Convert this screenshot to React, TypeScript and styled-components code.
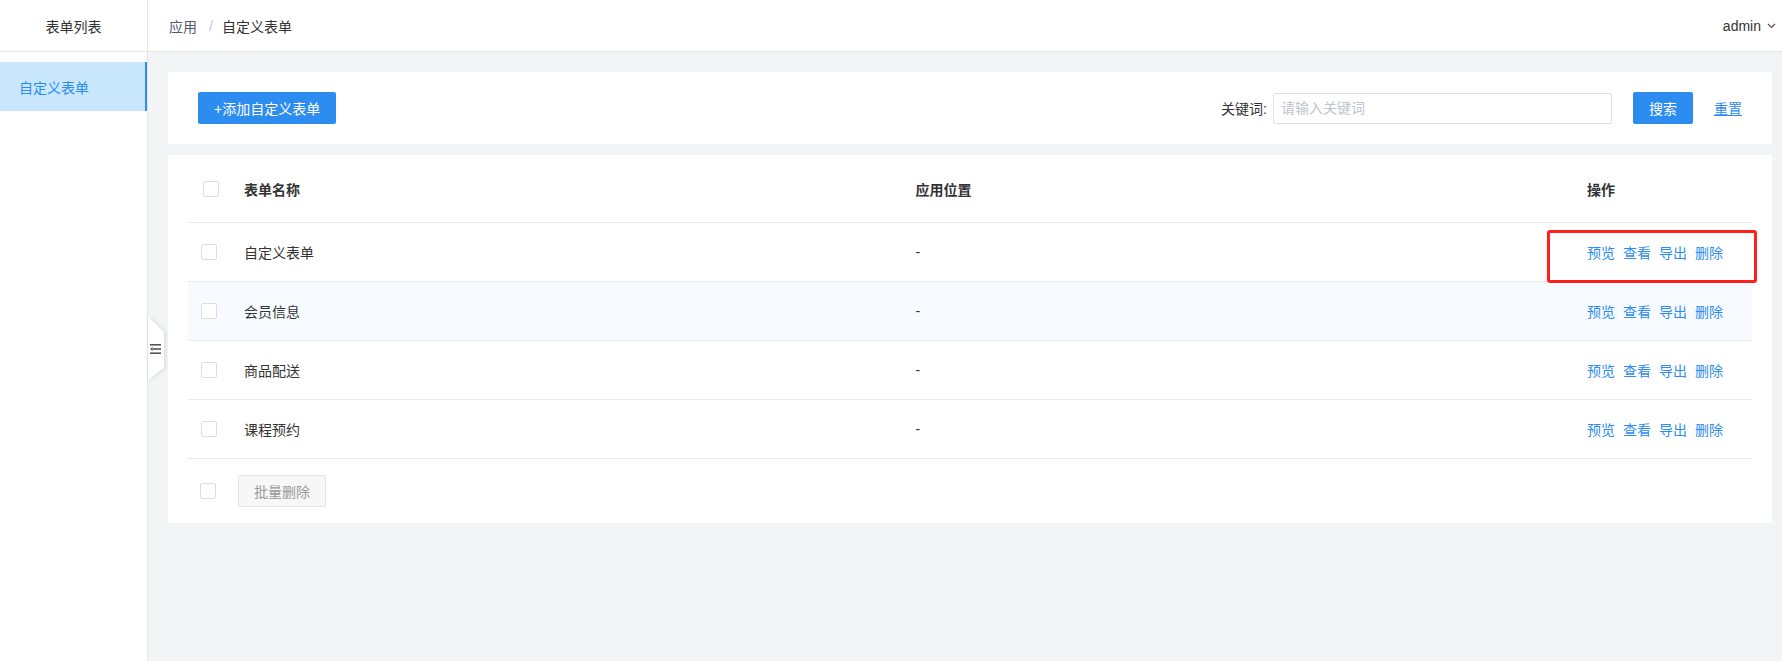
import React from "react";
import styled, { createGlobalStyle } from "styled-components";

const GlobalStyle = createGlobalStyle`
  html, body {
    margin: 0;
    height: 100%;
  }
  body {
    font-family: "Liberation Sans", "Noto Sans CJK SC", sans-serif;
    font-size: 14px;
    color: #333;
  }
  * {
    box-sizing: border-box;
  }
`;

const Layout = styled.div`
  display: flex;
  height: 100vh;
  background: #f3f4f6;
`;

const Sidebar = styled.aside`
  width: 148px;
  flex-shrink: 0;
  background: #ffffff;
  border-right: 1px solid #e6e6e6;
`;

const SideTitle = styled.div`
  height: 52px;
  display: flex;
  align-items: center;
  justify-content: center;
  border-bottom: 1px solid #e6e6e6;
  font-size: 14px;
  color: #333;
`;

const Menu = styled.ul`
  list-style: none;
  margin: 0;
  padding: 10px 0 0;
`;

const MenuItem = styled.li<{ $active?: boolean }>`
  height: 49px;
  display: flex;
  align-items: center;
  padding-left: 19px;
  font-size: 14px;
  color: ${p => (p.$active ? "#2d8cf0" : "#333")};
  background: ${p => (p.$active ? "#c8e7fc" : "transparent")};
  border-right: 2px solid ${p => (p.$active ? "#2d8cf0" : "transparent")};
`;

const Main = styled.div`
  flex: 1;
  display: flex;
  flex-direction: column;
  position: relative;
  min-width: 0;
`;

const Header = styled.header`
  height: 52px;
  display: flex;
  align-items: center;
  justify-content: space-between;
  padding: 0 6px 0 21px;
  background: #ffffff;
  border-bottom: 1px solid #e6e6e6;
`;

const Breadcrumb = styled.div`
  display: flex;
  align-items: center;
  font-size: 14px;
`;

const Crumb = styled.span<{ $current?: boolean }>`
  color: ${p => (p.$current ? "#333" : "#515a6e")};
`;

const Sep = styled.span`
  color: #c5c8ce;
  margin: 0 9px 0 12px;
`;

const User = styled.div`
  display: flex;
  align-items: center;
  gap: 6px;
  font-size: 14px;
  color: #333;
`;

const Content = styled.div`
  flex: 1;
  padding: 20px 10px 0 20px;
  display: flex;
  flex-direction: column;
  gap: 11px;
`;

const Card = styled.section`
  background: #ffffff;
`;

const Toolbar = styled(Card)`
  display: flex;
  align-items: center;
  justify-content: space-between;
  padding: 20px 30px;
`;

const PrimaryButton = styled.button<{ $width?: number }>`
  height: 32px;
  padding: 0 16px;
  min-width: ${p => (p.$width ? `${p.$width}px` : "auto")};
  border: none;
  border-radius: 2px;
  background: #2d8cf0;
  color: #ffffff;
  font-family: inherit;
  font-size: 14px;
  cursor: pointer;
`;

const Search = styled.div`
  display: flex;
  align-items: center;
`;

const Label = styled.label`
  font-size: 14px;
  color: #333;
  margin-right: 6px;
`;

const Input = styled.input`
  width: 339px;
  height: 31px;
  border: 1px solid #dcdfe6;
  border-radius: 2px;
  padding: 0 7px;
  font-family: inherit;
  font-size: 14px;
  outline: none;
  margin-right: 21px;

  &::placeholder {
    color: #c0c4cc;
  }
`;

const TextLink = styled.a`
  margin-left: 21px;
  color: #2d8cf0;
  text-decoration: underline;
  font-size: 14px;
  cursor: pointer;
`;

const TableCard = styled(Card)`
  padding: 0 20px;
`;

const Row = styled.div<{ $head?: boolean; $hover?: boolean }>`
  display: grid;
  grid-template-columns: 56px 1fr 1fr 165px;
  align-items: center;
  height: ${p => (p.$head ? "68px" : "59px")};
  border-bottom: 1px solid #e8eaec;
  background: ${p => (p.$hover ? "#f7fbff" : "#ffffff")};
  font-weight: ${p => (p.$head ? 600 : 400)};
  font-size: 14px;
  color: #333;
`;

const CheckCell = styled.div<{ $offset?: number }>`
  padding-left: ${p => p.$offset ?? 13}px;
  display: flex;
  align-items: center;
`;

const Checkbox = styled.span`
  width: 16px;
  height: 16px;
  border: 1px solid #dcdee2;
  border-radius: 2px;
  background: #ffffff;
  display: inline-block;
`;

const Cell = styled.div`
  padding-left: 0;
`;

const ActionCell = styled.div`
  position: relative;
  display: flex;
  gap: 8px;
  height: 100%;
  align-items: center;
`;

const Action = styled.a`
  color: #2d8cf0;
  font-size: 14px;
  font-weight: 400;
  cursor: pointer;
`;

const Highlight = styled.div`
  position: absolute;
  left: -40px;
  top: 7px;
  width: 210px;
  height: 53px;
  border: 3px solid #ff1f1f;
  border-radius: 3px;
  pointer-events: none;
`;

const Footer = styled.div`
  height: 64px;
  display: flex;
  align-items: center;
`;

const GhostButton = styled.button`
  height: 32px;
  padding: 0 15px;
  margin-left: 22px;
  border: 1px solid #e4e4e4;
  border-radius: 2px;
  background: #f7f7f7;
  color: #999;
  font-family: inherit;
  font-size: 14px;
`;

const CollapseTab = styled.div`
  position: absolute;
  left: 0;
  top: 317px;
  width: 16px;
  height: 63px;
  filter: drop-shadow(1px 0 2px rgba(0, 0, 0, 0.12));
  display: flex;

  &::before {
    content: "";
    position: absolute;
    inset: 0;
    background: #ffffff;
    clip-path: polygon(0 0, 100% 24%, 100% 80%, 0 100%);
  }

  svg {
    position: relative;
    margin: auto 0 auto 2px;
  }
`;

const rows = [
  { name: "自定义表单", place: "-" },
  { name: "会员信息", place: "-" },
  { name: "商品配送", place: "-" },
  { name: "课程预约", place: "-" },
];

const actions = ["预览", "查看", "导出", "删除"];

export default function App() {
  return (
    <>
      <GlobalStyle />
      <Layout>
        <Sidebar>
          <SideTitle>表单列表</SideTitle>
          <Menu>
            <MenuItem $active>自定义表单</MenuItem>
          </Menu>
        </Sidebar>
        <Main>
          <Header>
            <Breadcrumb>
              <Crumb>应用</Crumb>
              <Sep>/</Sep>
              <Crumb $current>自定义表单</Crumb>
            </Breadcrumb>
            <User>
              admin
              <svg width="9" height="6" viewBox="0 0 9 6" fill="none">
                <path d="M1 1l3.5 3.5L8 1" stroke="#555" strokeWidth="1.2" />
              </svg>
            </User>
          </Header>
          <Content>
            <Toolbar>
              <PrimaryButton>+添加自定义表单</PrimaryButton>
              <Search>
                <Label>关键词:</Label>
                <Input placeholder="请输入关键词" />
                <PrimaryButton $width={59}>搜索</PrimaryButton>
                <TextLink>重置</TextLink>
              </Search>
            </Toolbar>
            <TableCard>
              <Row $head>
                <CheckCell $offset={15}>
                  <Checkbox />
                </CheckCell>
                <Cell>表单名称</Cell>
                <Cell>应用位置</Cell>
                <Cell>操作</Cell>
              </Row>
              {rows.map((r, i) => (
                <Row key={r.name} $hover={i === 1}>
                  <CheckCell>
                    <Checkbox />
                  </CheckCell>
                  <Cell>{r.name}</Cell>
                  <Cell>{r.place}</Cell>
                  <ActionCell>
                    {actions.map(a => (
                      <Action key={a}>{a}</Action>
                    ))}
                    {i === 0 && <Highlight />}
                  </ActionCell>
                </Row>
              ))}
              <Footer>
                <CheckCell $offset={12}>
                  <Checkbox />
                </CheckCell>
                <GhostButton>批量删除</GhostButton>
              </Footer>
            </TableCard>
          </Content>
          <CollapseTab>
            <svg width="11" height="10" viewBox="0 0 11 10">
              <rect x="0" y="0" width="11" height="1.6" fill="#555" />
              <rect x="3" y="4.2" width="8" height="1.6" fill="#555" />
              <path d="M0 5l2.6-2v4z" fill="#555" />
              <rect x="0" y="8.4" width="11" height="1.6" fill="#555" />
            </svg>
          </CollapseTab>
        </Main>
      </Layout>
    </>
  );
}
